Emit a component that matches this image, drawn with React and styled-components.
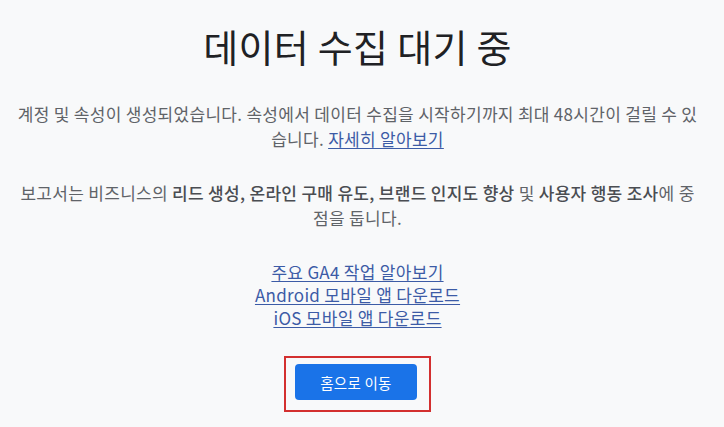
import React from "react";
import styled, { createGlobalStyle } from "styled-components";

const GlobalStyle = createGlobalStyle`
  html, body {
    margin: 0;
    padding: 0;
    background: #f8f9fa;
  }
  body {
    font-family: "Noto Sans CJK KR", "Noto Sans", sans-serif;
    color: #5f6368;
  }
`;

const links = [
  "주요 GA4 작업 알아보기",
  "Android 모바일 앱 다운로드",
  "iOS 모바일 앱 다운로드",
];

export default function App() {
  return (
    <>
      <GlobalStyle />
      <Page>
        <Content>
          <Title>데이터 수집 대기 중</Title>
          <Text>
            계정 및 속성이 생성되었습니다. 속성에서 데이터 수집을 시작하기까지
            최대 48시간이 걸릴 수 있습니다. <Link href="#">자세히 알아보기</Link>
          </Text>
          <Text>
            보고서는 비즈니스의{" "}
            <Strong>리드 생성, 온라인 구매 유도, 브랜드 인지도 향상</Strong> 및{" "}
            <Strong>사용자 행동 조사</Strong>에 중점을 둡니다.
          </Text>
          <LinkList>
            {links.map((l) => (
              <Link key={l} href="#">
                {l}
              </Link>
            ))}
          </LinkList>
          <Highlight>
            <HomeButton>홈으로 이동</HomeButton>
          </Highlight>
        </Content>
      </Page>
    </>
  );
}

const Page = styled.div`
  width: 715px;
  display: flex;
  justify-content: center;
`;

const Content = styled.main`
  width: 690px;
  display: flex;
  flex-direction: column;
  align-items: center;
  text-align: center;
  padding-top: 20px;
`;

const Title = styled.h1`
  margin: 0 0 30px;
  font-size: 38px;
  font-weight: 400;
  line-height: 52px;
  letter-spacing: 0.3px;
  color: #202124;
`;

const Text = styled.p`
  margin: 0 0 30px;
  font-size: 17px;
  line-height: 24.5px;
  letter-spacing: 0.3px;
`;

const Strong = styled.strong`
  font-weight: 500;
  color: #4a4d52;
`;

const Link = styled.a`
  color: #3c5ba6;
  text-decoration: underline;
  text-underline-offset: 2px;
`;

const LinkList = styled.nav`
  display: flex;
  flex-direction: column;
  align-items: center;
  font-size: 17px;
  line-height: 23px;
  letter-spacing: 0.3px;
`;

const Highlight = styled.div`
  margin-top: 27px;
  border: 2px solid #d32f2f;
  padding: 6px 12px 10px 9px;
`;

const HomeButton = styled.button`
  display: block;
  width: 122px;
  height: 36px;
  border: none;
  border-radius: 4px;
  background: #1a73e8;
  color: #fff;
  font-family: "Noto Sans CJK KR", "Noto Sans", sans-serif;
  font-size: 14.5px;
  letter-spacing: 0.25px;
  cursor: pointer;
`;
